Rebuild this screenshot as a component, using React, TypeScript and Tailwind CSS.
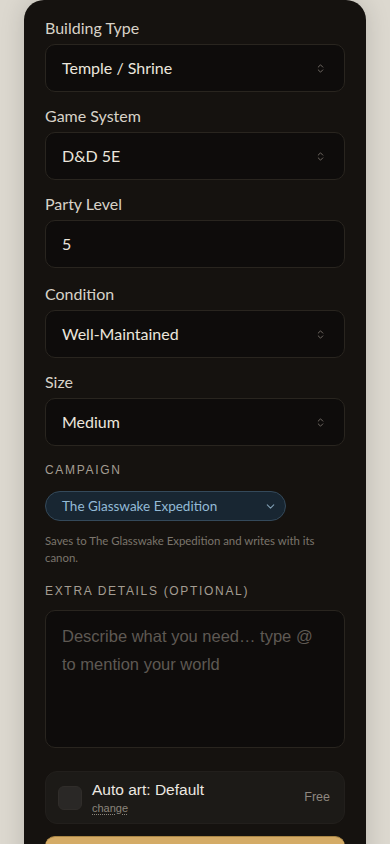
import { ChevronsUpDown, ChevronDown } from "lucide-react";

type SelectProps = {
    label: string;
    value: string;
}

function SelectField({ label, value }: SelectProps) {
    return (
        <div className="mb-[14px]">
            <div className="text-[16px] leading-5 text-[#d8d2c8] mb-[6px]">{label}</div>
            <div className="h-12 flex items-center justify-between rounded-[10px] border border-[#29251f] bg-[#0e0c0b] pl-[16px] pr-[18px]">
                <span className="text-[16px] text-[#ebe6dd]">{value}</span>
                <ChevronsUpDown size={11} strokeWidth={2} className="text-[#77716a]" />
            </div>
        </div>
    )
}

export default function App() {
    return (
        <div className="min-h-[844px] bg-[#dcd8cf] px-6 overflow-hidden" style={{ fontFamily: "Lato, 'Noto Sans', sans-serif" }}>
            <div className="bg-[#15120f] rounded-t-[20px] pt-[18px] px-[21px] pb-10 shadow-[0_0_24px_rgba(0,0,0,0.15)]">
                <SelectField label="Building Type" value="Temple / Shrine" />
                <SelectField label="Game System" value="D&D 5E" />

                <div className="mb-4">
                    <div className="text-[16px] leading-5 text-[#d8d2c8] mb-[6px]">Party Level</div>
                    <div className="h-12 flex items-center rounded-[10px] border border-[#29251f] bg-[#0e0c0b] px-[16px]">
                        <span className="text-[16px] text-[#ebe6dd]">5</span>
                    </div>
                </div>

                <SelectField label="Condition" value="Well-Maintained" />
                <SelectField label="Size" value="Medium" />

                <div className="mt-[4px] text-[12px] leading-5 tracking-[0.14em] text-[#a49d92]" style={{ fontFamily: "'Liberation Sans', Arial, sans-serif" }}>CAMPAIGN</div>
                <div className="mt-[11px] w-[241px] h-[30px] flex items-center justify-between rounded-full border border-[#34495a] bg-[#182632] pl-[16px] pr-[8px]">
                    <span className="text-[13.5px] text-[#93bad6]">The Glasswake Expedition</span>
                    <ChevronDown size={13} strokeWidth={2} className="text-[#7f9db2]" />
                </div>
                <p className="mt-[11px] text-[11.4px] leading-[17px] text-[#7b756c] pr-4">Saves to The Glasswake Expedition and writes with its canon.</p>

                <div className="mt-[15px] text-[12px] leading-5 tracking-[0.14em] text-[#a49d92]" style={{ fontFamily: "'Liberation Sans', Arial, sans-serif" }}>EXTRA DETAILS (OPTIONAL)</div>
                <div className="mt-[9px] h-[138px] rounded-[10px] border border-[#29251f] bg-[#0e0c0b] px-[16px] pt-[11px]" style={{ fontFamily: "'Liberation Sans', Arial, sans-serif" }}>
                    <p className="text-[16.5px] leading-7 text-[#5e5953]">Describe what you need… type @ to mention your world</p>
                </div>

                <div className="mt-[23px] h-[53px] flex items-center rounded-[12px] border border-[#221f1c] bg-[#1c1a17] pl-[12px] pr-[14px]" style={{ fontFamily: "'Liberation Sans', Arial, sans-serif" }}>
                    <div className="w-6 h-6 rounded-[6px] bg-[#2a2826] border border-[#302d2a]" />
                    <div className="ml-[10px] flex flex-col">
                        <span className="text-[15.5px] leading-[18px] text-[#ece8e1]">Auto art: Default</span>
                        <span className="text-[11px] leading-[14px] mt-[2px] text-[#8b857c] underline decoration-dotted underline-offset-2 w-fit">change</span>
                    </div>
                    <span className="ml-auto text-[12.5px] text-[#8e8880]">Free</span>
                </div>

                <button className="mt-[12px] w-full h-12 rounded-[10px] bg-[#d4ab66] border-t border-[#a88545]" />
            </div>
        </div>
    )
}
